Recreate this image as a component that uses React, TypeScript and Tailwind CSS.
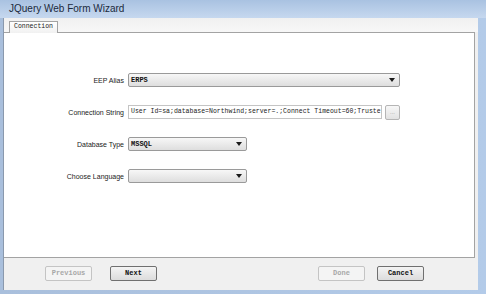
import React from "react";

const mono = { fontFamily: '"Liberation Mono", "DejaVu Sans Mono", monospace' };
const sans = { fontFamily: '"Liberation Sans", Arial, sans-serif' };

const Arrow = () => (
  <svg width="6" height="4" viewBox="0 0 6 4">
    <path d="M0 0 H6 L3 4 Z" fill="#1a1a1a" />
  </svg>
);

const Select: React.FC<{ value?: string; width: string }> = ({ value, width }) => (
  <div
    className={`${width} h-[14px] flex items-center justify-between border border-[#9a9a9a] rounded-[2px] bg-gradient-to-b from-[#f7f7f7] to-[#dedede] pl-[2px] pr-[4px]`}
  >
    <span className="text-[7px] font-bold text-[#111] leading-none" style={mono}>
      {value}
    </span>
    <Arrow />
  </div>
);

const Row: React.FC<{ label: string; children: React.ReactNode }> = ({ label, children }) => (
  <div className="flex items-center h-[14px]">
    <div className="w-[120px] text-right text-[7px] text-[#222] leading-none" style={sans}>
      {label}
    </div>
    <div className="ml-[4px] flex items-center">{children}</div>
  </div>
);

const Btn: React.FC<{ text: string; disabled?: boolean }> = ({ text, disabled }) => (
  <div
    className={`w-[47px] h-[15px] flex items-center justify-center rounded-[2px] border text-[7px] font-bold leading-none ${
      disabled
        ? "border-[#c4c4c4] bg-[#f4f4f4] text-[#a8a8a8]"
        : "border-[#707070] bg-gradient-to-b from-[#f4f4f4] to-[#dcdcdc] text-[#111]"
    }`}
    style={mono}
  >
    {text}
  </div>
);

export default function App() {
  return (
    <div className="w-[486px] h-[294px] flex flex-col bg-[#bcd1ec] overflow-hidden">
      <div className="h-[18px] flex items-center pl-[9px] bg-gradient-to-b from-[#a9c2e1] to-[#c6d8ef]">
        <span className="text-[10px] text-[#1b2a3c] leading-none" style={sans}>
          JQuery Web Form Wizard
        </span>
      </div>
      <div className="flex-1 flex pl-[3px] pr-[8px] pb-[4px] bg-gradient-to-r from-[#a9bfdc] to-[#b3cbe9]">
        <div className="flex-1 flex flex-col bg-[#f0f0f0] border-l border-[#8a99ad]">
          <div className="h-[14px] flex items-end bg-gradient-to-b from-[#f0f0f0] to-[#f7f7f7] pl-[5px] pr-[3px]">
            <div className="h-[12px] px-[4px] flex items-center bg-gradient-to-b from-[#ffffff] to-[#f1f1f1] border border-b-0 border-[#a3a3a3] -mb-px relative z-10">
              <span className="text-[6.5px] text-[#222] leading-none" style={mono}>
                Connection
              </span>
            </div>
          </div>
          <div className="flex-1 mr-[3px] bg-white border-t border-b border-r border-[#a3a3a3] flex flex-col gap-[18px] pt-[40px]">
            <Row label="EEP Alias">
              <Select value="ERPS" width="w-[272px]" />
            </Row>
            <Row label="Connection String">
              <div className="w-[254px] h-[14px] border border-[#c4c4c4] bg-white flex items-center pl-[2px] overflow-hidden whitespace-nowrap">
                <span className="text-[6.5px] text-[#222] leading-none" style={mono}>
                  User Id=sa;database=Northwind;server=.;Connect Timeout=60;Truste
                </span>
              </div>
              <div className="ml-[3px] w-[15px] h-[15px] border border-[#b5b5b5] rounded-[2px] bg-gradient-to-b from-[#f7f7f7] to-[#e2e2e2] flex items-center justify-center text-[6px] text-[#999] leading-none" style={sans}>
                ...
              </div>
            </Row>
            <Row label="Database Type">
              <Select value="MSSQL" width="w-[119px]" />
            </Row>
            <Row label="Choose Language">
              <Select width="w-[119px]" />
            </Row>
          </div>
          <div className="h-[32px] flex items-center justify-between pl-[41px] pr-[54px] pb-[1px]">
            <div className="flex gap-[18px]">
              <Btn text="Previous" disabled />
              <Btn text="Next" />
            </div>
            <div className="flex gap-[12px]">
              <Btn text="Done" disabled />
              <Btn text="Cancel" />
            </div>
          </div>
        </div>
      </div>
    </div>
  );
}
